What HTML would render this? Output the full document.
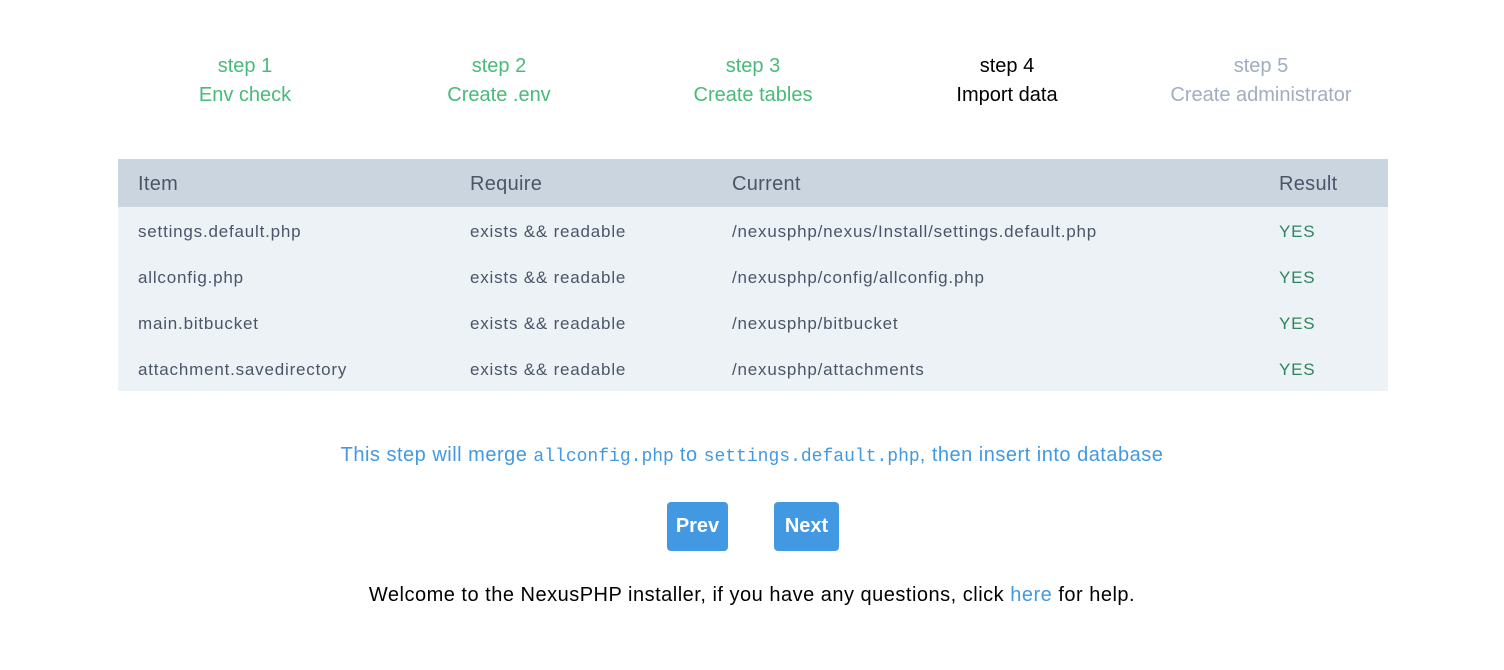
<!DOCTYPE html>
<html><head><meta charset="utf-8"><style>
body{margin:0;background:#fff;font-family:"Liberation Sans",sans-serif;width:1504px;height:670px;position:relative;overflow:hidden}
.step{position:absolute;top:52px;width:254px;text-align:center;font-size:20px;line-height:29px}
.g{color:#48bb78}.k{color:#000}.x{color:#a0aec0}
.tbl{position:absolute;left:118px;top:159px;width:1270px;height:232px;background:#edf2f7}
.hd{position:absolute;left:0;top:0;width:1270px;height:48px;background:#cbd5e0}
.c{position:absolute;color:#4a5568;font-size:17px;white-space:nowrap;letter-spacing:0.8px}
.h{font-size:20px;color:#4a5568;letter-spacing:0.3px}
.y{color:#2f855a}
.msg{position:absolute;top:444px;left:0;width:1504px;text-align:center;color:#4299e1;font-size:20px;letter-spacing:0.5px}
.msg code{font-family:"Liberation Mono",monospace;font-size:18px;letter-spacing:0}
.btn{position:absolute;top:502px;height:49px;background:#4299e1;color:#fff;border-radius:4px;font-size:20px;font-weight:bold;line-height:49px;text-align:center}
.ft{position:absolute;top:584px;left:0;width:1504px;text-align:center;font-size:20px;color:#000;letter-spacing:0.5px}
.ft span{color:#4299e1}
</style></head><body>
<div class="step g" style="left:118px">step 1<br>Env check</div>
<div class="step g" style="left:372px">step 2<br>Create .env</div>
<div class="step g" style="left:626px">step 3<br>Create tables</div>
<div class="step k" style="left:880px">step 4<br>Import data</div>
<div class="step x" style="left:1134px">step 5<br>Create administrator</div>
<div class="tbl"><div class="hd"></div>
<div class="c h" style="left:20px;top:14px">Item</div>
<div class="c h" style="left:352px;top:14px">Require</div>
<div class="c h" style="left:614px;top:14px">Current</div>
<div class="c h" style="left:1161px;top:14px">Result</div>
<div class="c" style="left:20px;top:63px">settings.default.php</div><div class="c" style="left:352px;top:63px">exists &amp;&amp; readable</div><div class="c" style="left:614px;top:63px">/nexusphp/nexus/Install/settings.default.php</div><div class="c y" style="left:1161px;top:63px">YES</div>
<div class="c" style="left:20px;top:109px">allconfig.php</div><div class="c" style="left:352px;top:109px">exists &amp;&amp; readable</div><div class="c" style="left:614px;top:109px">/nexusphp/config/allconfig.php</div><div class="c y" style="left:1161px;top:109px">YES</div>
<div class="c" style="left:20px;top:155px">main.bitbucket</div><div class="c" style="left:352px;top:155px">exists &amp;&amp; readable</div><div class="c" style="left:614px;top:155px">/nexusphp/bitbucket</div><div class="c y" style="left:1161px;top:155px">YES</div>
<div class="c" style="left:20px;top:201px">attachment.savedirectory</div><div class="c" style="left:352px;top:201px">exists &amp;&amp; readable</div><div class="c" style="left:614px;top:201px">/nexusphp/attachments</div><div class="c y" style="left:1161px;top:201px">YES</div>
</div>
<div class="msg">This step will merge <code>allconfig.php</code> to <code>settings.default.php</code>, then insert into database</div>
<div class="btn" style="left:667px;width:61px">Prev</div>
<div class="btn" style="left:774px;width:65px">Next</div>
<div class="ft">Welcome to the NexusPHP installer, if you have any questions, click <span>here</span> for help.</div>
</body></html>
